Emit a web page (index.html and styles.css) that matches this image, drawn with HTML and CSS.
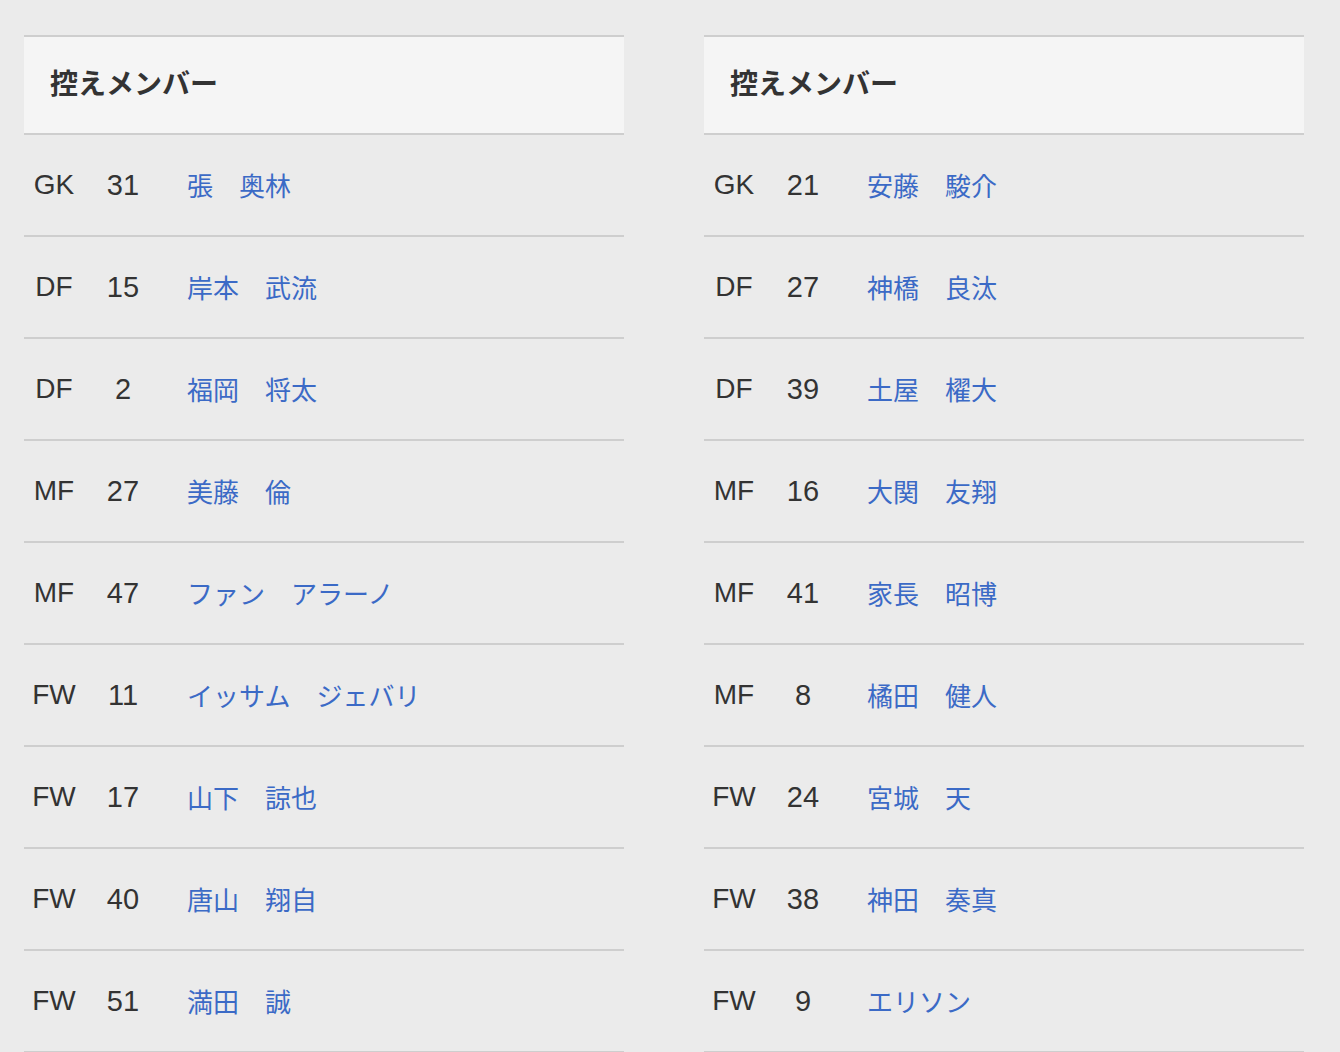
FILE: index.html
```html
<!DOCTYPE html>
<html lang="ja">
<head>
<meta charset="utf-8">
<title>控えメンバー</title>
<link rel="stylesheet" href="styles.css">
</head>
<body>
<div class="page">
  <section class="squad">
    <h2 class="squad-head">控えメンバー</h2>
    <div class="row"><span class="pos">GK</span><span class="num">31</span><a class="name">張　奥林</a></div>
    <div class="row"><span class="pos">DF</span><span class="num">15</span><a class="name">岸本　武流</a></div>
    <div class="row"><span class="pos">DF</span><span class="num">2</span><a class="name">福岡　将太</a></div>
    <div class="row"><span class="pos">MF</span><span class="num">27</span><a class="name">美藤　倫</a></div>
    <div class="row"><span class="pos">MF</span><span class="num">47</span><a class="name">ファン　アラーノ</a></div>
    <div class="row"><span class="pos">FW</span><span class="num">11</span><a class="name">イッサム　ジェバリ</a></div>
    <div class="row"><span class="pos">FW</span><span class="num">17</span><a class="name">山下　諒也</a></div>
    <div class="row"><span class="pos">FW</span><span class="num">40</span><a class="name">唐山　翔自</a></div>
    <div class="row"><span class="pos">FW</span><span class="num">51</span><a class="name">満田　誠</a></div>
  </section>
  <section class="squad">
    <h2 class="squad-head">控えメンバー</h2>
    <div class="row"><span class="pos">GK</span><span class="num">21</span><a class="name">安藤　駿介</a></div>
    <div class="row"><span class="pos">DF</span><span class="num">27</span><a class="name">神橋　良汰</a></div>
    <div class="row"><span class="pos">DF</span><span class="num">39</span><a class="name">土屋　櫂大</a></div>
    <div class="row"><span class="pos">MF</span><span class="num">16</span><a class="name">大関　友翔</a></div>
    <div class="row"><span class="pos">MF</span><span class="num">41</span><a class="name">家長　昭博</a></div>
    <div class="row"><span class="pos">MF</span><span class="num">8</span><a class="name">橘田　健人</a></div>
    <div class="row"><span class="pos">FW</span><span class="num">24</span><a class="name">宮城　天</a></div>
    <div class="row"><span class="pos">FW</span><span class="num">38</span><a class="name">神田　奏真</a></div>
    <div class="row"><span class="pos">FW</span><span class="num">9</span><a class="name">エリソン</a></div>
  </section>
</div>
</body>
</html>
```

FILE: styles.css
```css
html, body {
  margin: 0;
  padding: 0;
  background: #ebebeb;
}
body {
  font-family: "Noto Sans CJK JP", "Noto Sans", sans-serif;
  color: #333333;
}
.page {
  display: flex;
  gap: 80px;
  padding: 35px 0 0 24px;
}
.squad {
  width: 600px;
  flex: none;
}
.squad-head {
  margin: 0;
  height: 90px;
  box-sizing: content-box;
  display: flex;
  align-items: center;
  padding: 0 0 6px 26px;
  background: #f5f5f5;
  border-top: 2px solid #cecece;
  border-bottom: 2px solid #cecece;
  font-size: 28px;
  font-weight: 700;
  line-height: 1;
  color: #333333;
}
.row {
  display: grid;
  grid-template-columns: 60px 80px 1fr;
  align-items: center;
  height: 100px;
  border-bottom: 2px solid #cecece;
}
.pos, .num {
  text-align: center;
  font-family: "Liberation Sans", Arial, sans-serif;
  font-size: 28px;
  line-height: 1;
  color: #333333;
}
.num {
  font-size: 29px;
  padding-right: 2px;
}
.name {
  padding-left: 23px;
  font-size: 26px;
  line-height: 1;
  color: #3b6ac6;
  text-decoration: none;
}
```
